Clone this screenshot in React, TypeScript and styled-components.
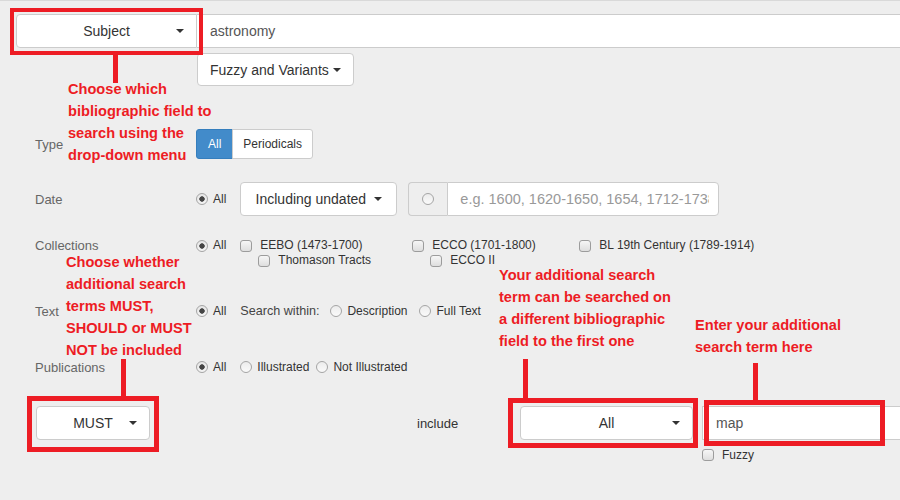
import styled, { createGlobalStyle } from "styled-components";

const GlobalStyle = createGlobalStyle`
  html, body {
    margin: 0;
    padding: 0;
    background: #eeeeee;
  }
  body {
    font-family: "Liberation Sans", Arial, sans-serif;
  }
  * {
    box-sizing: border-box;
  }
`;

const RED = "#ed1c24";

const Page = styled.div`
  position: relative;
  width: 900px;
  height: 500px;
  overflow: hidden;
  background: #eeeeee;
  border-top: 1px solid #d9d9d9;
  font-family: "Liberation Sans", Arial, sans-serif;
  color: #333;
`;

const SearchGroup = styled.div`
  display: flex;
  height: 34px;
  margin: 13px -20px 0 16px;
`;

const SelectButton = styled.button<{ $width: number; $joined?: boolean }>`
  display: grid;
  grid-template-columns: 1fr auto 1fr;
  align-items: center;
  flex: none;
  width: ${(p) => p.$width}px;
  height: 34px;
  padding: 0 12px;
  background: #fff;
  border: 1px solid #ccc;
  border-radius: ${(p) => (p.$joined ? "4px 0 0 4px" : "4px")};
  font: 14px "Liberation Sans", Arial, sans-serif;
  color: #333;

  .label {
    grid-column: 2;
  }
`;

const Caret = styled.span`
  grid-column: 3;
  justify-self: end;
  display: inline-block;
  width: 0;
  height: 0;
  border-top: 4px solid #333;
  border-left: 4px solid transparent;
  border-right: 4px solid transparent;
`;

const TextInput = styled.input<{ $joined?: boolean }>`
  flex: 1;
  min-width: 0;
  height: 34px;
  padding: 0 12px 0 13px;
  background: #fff;
  border: 1px solid #ccc;
  border-left-width: ${(p) => (p.$joined ? "1px" : "0")};
  border-radius: ${(p) => (p.$joined ? "0 4px 4px 0" : "0")};
  font: 14px "Liberation Sans", Arial, sans-serif;
  color: #555;
  outline: none;

  &::placeholder {
    color: #999;
  }
`;

const OptionsRow = styled.div`
  display: flex;
  margin: 5px 0 0 197px;
`;

const DropButton = styled.button<{ $width?: number; $height: number; $gap?: number }>`
  display: inline-flex;
  align-items: center;
  justify-content: center;
  gap: ${(p) => p.$gap ?? 4}px;
  flex: none;
  width: ${(p) => (p.$width ? `${p.$width}px` : "auto")};
  height: ${(p) => p.$height}px;
  padding: 0 12px;
  background: #fff;
  border: 1px solid #ccc;
  border-radius: 4px;
  font: 14px "Liberation Sans", Arial, sans-serif;
  color: #333;
`;

const FormRow = styled.div<{ $top: number; $height: number; $start?: boolean }>`
  display: grid;
  grid-template-columns: 196px 1fr;
  align-items: ${(p) => (p.$start ? "start" : "center")};
  height: ${(p) => p.$height}px;
  margin-top: ${(p) => p.$top}px;
`;

const RowLabel = styled.div`
  padding-left: 35px;
  font-size: 13px;
  line-height: 15px;
  color: #666;
`;

const Controls = styled.div<{ $start?: boolean }>`
  display: flex;
  align-items: ${(p) => (p.$start ? "flex-start" : "center")};
`;

const ToggleGroup = styled.div`
  display: flex;
  height: 30px;
`;

const Toggle = styled.button<{ $active?: boolean }>`
  height: 30px;
  padding: 0 ${(p) => (p.$active ? "11px" : "10px")};
  margin-left: ${(p) => (p.$active ? "0" : "-1px")};
  font: 12px "Liberation Sans", Arial, sans-serif;
  color: ${(p) => (p.$active ? "#fff" : "#333")};
  background: ${(p) => (p.$active ? "#428bca" : "#fff")};
  border: 1px solid ${(p) => (p.$active ? "#357ebd" : "#ccc")};
  border-radius: ${(p) => (p.$active ? "3px 0 0 3px" : "0 3px 3px 0")};
`;

const Option = styled.label<{ $after?: number }>`
  display: inline-flex;
  align-items: center;
  gap: 5px;
  margin-right: ${(p) => p.$after ?? 14}px;
  font-size: 12px;
  line-height: 15px;
  color: #333;
  white-space: nowrap;
`;

const Radio = styled.input.attrs({ type: "radio" })`
  appearance: none;
  flex: none;
  width: 12px;
  height: 12px;
  margin: 0;
  border: 1px solid #a5a5a5;
  border-radius: 50%;
  background: linear-gradient(#ececec, #fafafa);

  &:checked {
    background: radial-gradient(circle, #444 0 2.4px, transparent 3px),
      linear-gradient(#e6e6e6, #f4f4f4);
  }
`;

const Check = styled.input.attrs({ type: "checkbox" })`
  appearance: none;
  flex: none;
  width: 12px;
  height: 12px;
  margin: 0 3px 0 0;
  border: 1px solid #9c9c9c;
  border-radius: 3px;
  background: linear-gradient(#f6f6f6, #dedede);
`;

const PlainText = styled.span<{ $after?: number }>`
  margin-right: ${(p) => p.$after ?? 0}px;
  font-size: 12.6px;
  color: #444;
  white-space: nowrap;
`;

const DateGroup = styled.div`
  display: flex;
  width: 311px;
  height: 34px;
  margin-left: 11px;
`;

const Addon = styled.div`
  display: flex;
  align-items: center;
  justify-content: center;
  width: 39px;
  flex: none;
  background: #eee;
  border: 1px solid #ccc;
  border-right: 0;
  border-radius: 4px 0 0 4px;
`;

const DateInput = styled(TextInput)`
  padding: 0 9px 0 12px;

  &::placeholder {
    font-size: 14.5px;
  }
`;

const Collection = styled.div<{ $width?: number }>`
  display: flex;
  flex-direction: column;
  width: ${(p) => (p.$width ? `${p.$width}px` : "auto")};
`;

const SubOption = styled(Option)`
  margin-left: 18px;
`;

const BottomRow = styled.div`
  display: flex;
  align-items: center;
  height: 34px;
  margin-top: 29px;
  padding-left: 36px;
`;

const Include = styled.div`
  flex: none;
  width: 103px;
  margin-left: 267px;
  font-size: 13px;
  color: #333;
`;

const TermInput = styled(TextInput)`
  flex: none;
  width: 230px;
  margin-left: 9px;
  border-left-width: 1px;
  border-radius: 0;
`;

const FuzzyRow = styled.div`
  display: flex;
  height: 14px;
  margin-top: 8px;
  padding-left: 702px;
`;

/* annotation overlay */

const Callout = styled.div<{ $x: number; $y: number }>`
  position: absolute;
  left: ${(p) => p.$x}px;
  top: ${(p) => p.$y}px;
  font: bold 14.6px/22px "Liberation Sans", Arial, sans-serif;
  color: ${RED};
  white-space: nowrap;
  pointer-events: none;
`;

const Frame = styled.div<{ $x: number; $y: number; $w: number; $h: number; $b: number }>`
  position: absolute;
  left: ${(p) => p.$x}px;
  top: ${(p) => p.$y}px;
  width: ${(p) => p.$w}px;
  height: ${(p) => p.$h}px;
  border: ${(p) => p.$b}px solid ${RED};
  pointer-events: none;
`;

const Stem = styled.div<{ $x: number; $y: number; $h: number }>`
  position: absolute;
  left: ${(p) => p.$x}px;
  top: ${(p) => p.$y}px;
  width: 5px;
  height: ${(p) => p.$h}px;
  background: ${RED};
  pointer-events: none;
`;

export default function App() {
  return (
    <Page>
      <GlobalStyle />

      <SearchGroup>
        <SelectButton $width={181} $joined>
          <span className="label">Subject</span>
          <Caret />
        </SelectButton>
        <TextInput defaultValue="astronomy" />
      </SearchGroup>

      <OptionsRow>
        <DropButton $height={33}>
          Fuzzy and Variants
          <Caret />
        </DropButton>
      </OptionsRow>

      <FormRow $top={43} $height={30}>
        <RowLabel>Type</RowLabel>
        <Controls>
          <ToggleGroup>
            <Toggle $active>All</Toggle>
            <Toggle>Periodicals</Toggle>
          </ToggleGroup>
        </Controls>
      </FormRow>

      <FormRow $top={23} $height={34}>
        <RowLabel>Date</RowLabel>
        <Controls>
          <Option>
            <Radio name="date" defaultChecked />
            All
          </Option>
          <DropButton $width={157} $height={34} $gap={8}>
            Including undated
            <Caret />
          </DropButton>
          <DateGroup>
            <Addon>
              <Radio name="date" />
            </Addon>
            <DateInput $joined placeholder="e.g. 1600, 1620-1650, 1654, 1712-1738" />
          </DateGroup>
        </Controls>
      </FormRow>

      <FormRow $top={22} $height={30} $start>
        <RowLabel>Collections</RowLabel>
        <Controls $start>
          <Option>
            <Radio name="coll" defaultChecked />
            All
          </Option>
          <Collection $width={172}>
            <Option>
              <Check />
              EEBO (1473-1700)
            </Option>
            <SubOption>
              <Check />
              Thomason Tracts
            </SubOption>
          </Collection>
          <Collection $width={167}>
            <Option>
              <Check />
              ECCO (1701-1800)
            </Option>
            <SubOption>
              <Check />
              ECCO II
            </SubOption>
          </Collection>
          <Collection>
            <Option>
              <Check />
              BL 19th Century (1789-1914)
            </Option>
          </Collection>
        </Controls>
      </FormRow>

      <FormRow $top={33} $height={20}>
        <RowLabel>Text</RowLabel>
        <Controls>
          <Option>
            <Radio name="text" defaultChecked />
            All
          </Option>
          <PlainText $after={11}>Search within:</PlainText>
          <Option $after={12}>
            <Radio name="text" />
            Description
          </Option>
          <Option>
            <Radio name="text" />
            Full Text
          </Option>
        </Controls>
      </FormRow>

      <FormRow $top={36} $height={20}>
        <RowLabel>Publications</RowLabel>
        <Controls>
          <Option>
            <Radio name="pub" defaultChecked />
            All
          </Option>
          <Option $after={7}>
            <Radio name="pub" />
            Illustrated
          </Option>
          <Option>
            <Radio name="pub" />
            Not Illustrated
          </Option>
        </Controls>
      </FormRow>

      <BottomRow>
        <SelectButton $width={114}>
          <span className="label">MUST</span>
          <Caret />
        </SelectButton>
        <Include>include</Include>
        <SelectButton $width={173}>
          <span className="label">All</span>
          <Caret />
        </SelectButton>
        <TermInput defaultValue="map" />
      </BottomRow>

      <FuzzyRow>
        <Option>
          <Check />
          Fuzzy
        </Option>
      </FuzzyRow>

      <Frame $x={10} $y={7} $w={193} $h={47} $b={4} />
      <Stem $x={113} $y={54} $h={28} />
      <Callout $x={68} $y={77}>
        Choose which
        <br />
        bibliographic field to
        <br />
        search using the
        <br />
        drop-down menu
      </Callout>

      <Callout $x={66} $y={250}>
        Choose whether
        <br />
        additional search
        <br />
        terms MUST,
        <br />
        SHOULD or MUST
        <br />
        NOT be included
      </Callout>
      <Stem $x={121} $y={358} $h={37} />
      <Frame $x={27} $y={395} $w={132} $h={56} $b={5} />

      <Callout $x={499} $y={263}>
        Your additional search
        <br />
        term can be searched on
        <br />
        a different bibliographic
        <br />
        field to the first one
      </Callout>
      <Stem $x={523} $y={358} $h={39} />
      <Frame $x={508} $y={397} $w={190} $h={50} $b={5} />

      <Callout $x={695} $y={313}>
        Enter your additional
        <br />
        search term here
      </Callout>
      <Stem $x={753} $y={362} $h={37} />
      <Frame $x={704} $y={399} $w={181} $h={46} $b={5} />
    </Page>
  );
}
